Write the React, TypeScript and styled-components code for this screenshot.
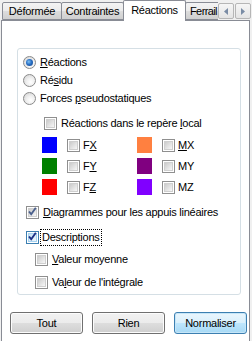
import React from 'react';
import styled, { createGlobalStyle } from 'styled-components';

const GlobalStyle = createGlobalStyle`
  html, body {
    margin: 0;
    padding: 0;
    background: #f0f0f0;
    overflow: hidden;
  }
  body {
    font-family: "Liberation Sans", Arial, sans-serif;
    font-size: 11px;
    letter-spacing: -0.25px;
    color: #000;
  }
`;

const Window = styled.div`
  width: 252px;
  height: 341px;
  background: #f0f0f0;
  overflow: hidden;
`;

const TabStrip = styled.div`
  display: flex;
  height: 20px;
  align-items: flex-start;
`;

const TabList = styled.div`
  display: flex;
  align-items: flex-start;
  width: 218px;
  height: 21px;
  overflow: hidden;
  position: relative;
  z-index: 1;
  padding-left: 2px;
  box-sizing: border-box;
`;

const Tab = styled.div<{ $selected?: boolean; $w: number }>`
  flex: 0 0 auto;
  box-sizing: border-box;
  width: ${(p) => p.$w}px;
  height: ${(p) => (p.$selected ? 21 : 18)}px;
  margin-top: ${(p) => (p.$selected ? 0 : 2)}px;
  margin-left: -1px;
  border: 1px solid #898c95;
  border-bottom: ${(p) => (p.$selected ? 'none' : '1px solid #898c95')};
  border-radius: 2px 2px 0 0;
  background: ${(p) =>
    p.$selected ? '#ffffff' : 'linear-gradient(#f3f3f3, #ebebeb 50%, #dddddd 51%, #cfcfcf)'};
  display: flex;
  justify-content: center;
  padding-top: ${(p) => (p.$selected ? 3 : 2)}px;
  white-space: nowrap;
  position: relative;
  z-index: ${(p) => (p.$selected ? 2 : 1)};
  &:first-child {
    margin-left: 0;
  }
`;

const TabLabelLeft = styled.span`
  padding-left: 4px;
  align-self: flex-start;
  width: 100%;
  letter-spacing: -0.6px;
`;

const Arrows = styled.div`
  display: flex;
  margin-top: 3px;
  gap: 1px;
`;

const ArrowButton = styled.div`
  width: 16px;
  height: 16px;
  box-sizing: border-box;
  border: 1px solid #b6b6b6;
  border-radius: 2px;
  background: linear-gradient(#f6f6f6, #e4e4e4);
  display: flex;
  align-items: center;
  justify-content: center;
`;

const Panel = styled.div`
  margin-left: 1px;
  width: 249px;
  height: 340px;
  box-sizing: border-box;
  border: 1px solid #898c95;
  background: #ffffff;
  padding: 27px 8px 0 15px;
`;

const Group = styled.div`
  border: 1px solid #d5dfe5;
  border-radius: 3px;
  padding: 4px 0 3px 0;
  display: flex;
  flex-direction: column;
`;

const Row = styled.div<{ $indent: number; $top?: number }>`
  display: flex;
  align-items: center;
  height: 18px;
  padding-left: ${(p) => p.$indent}px;
  margin-top: ${(p) => p.$top ?? 0}px;
  white-space: nowrap;
`;

const Label = styled.span<{ $gap?: number; $focus?: boolean }>`
  margin-left: ${(p) => p.$gap ?? 4}px;
  ${(p) =>
    p.$focus
      ? `outline: 1px dotted #000; outline-offset: 0; padding: 1px 1px 2px 1px; margin-left: 2px;`
      : ''}
`;

const RadioCircle = styled.span<{ $checked?: boolean }>`
  width: 13px;
  height: 13px;
  box-sizing: border-box;
  border-radius: 50%;
  border: 1px solid #8a8a8a;
  background: radial-gradient(circle at 60% 65%, #ffffff 0%, #f0f0f0 40%, #cfcfcf 100%);
  display: flex;
  align-items: center;
  justify-content: center;
  &::after {
    content: '';
    display: ${(p) => (p.$checked ? 'block' : 'none')};
    width: 7px;
    height: 7px;
    border-radius: 50%;
    background: radial-gradient(circle at 40% 40%, #7fc3f5 0%, #2a6fc4 45%, #0e3f86 100%);
  }
`;

const CheckBox = styled.span<{ $hot?: boolean }>`
  flex: 0 0 auto;
  width: 13px;
  height: 13px;
  box-sizing: border-box;
  border: 1px solid ${(p) => (p.$hot ? '#3c7fb1' : '#8f8f8f')};
  background: #ffffff;
  padding: 1px;
  display: flex;
`;

const CheckInner = styled.span<{ $hot?: boolean }>`
  flex: 1;
  border: 1px solid ${(p) => (p.$hot ? '#a6d2f0' : '#cfcfcf')};
  background: ${(p) =>
    p.$hot ? 'linear-gradient(135deg, #c4e0f4, #eef7fd)' : 'linear-gradient(135deg, #cbcbcb, #f7f7f7)'};
  position: relative;
`;

const Mark = styled.svg`
  position: absolute;
  left: -2px;
  top: -3px;
`;

const ColorGrid = styled.div`
  display: grid;
  grid-template-columns: 95px 80px;
  row-gap: 5px;
  padding-left: 24px;
  margin-top: 5px;
`;

const ColorCell = styled.div`
  display: flex;
  align-items: center;
  height: 16px;
`;

const Swatch = styled.span<{ $color: string }>`
  width: 15px;
  height: 16px;
  background: ${(p) => p.$color};
  margin-right: 10px;
`;

const ButtonRow = styled.div`
  display: flex;
  justify-content: space-between;
  margin-top: 17px;
  padding: 0 2px 0 8px;
  margin-left: -15px;
  margin-right: -8px;
`;

const Button = styled.div<{ $default?: boolean }>`
  width: 73px;
  height: 22px;
  box-sizing: border-box;
  border: 1px solid ${(p) => (p.$default ? '#3c7fb1' : '#707070')};
  border-radius: 3px;
  background: ${(p) =>
    p.$default
      ? 'linear-gradient(#eaf6fd, #d9f0fc 50%, #bee6fd 51%, #a7d9f5)'
      : 'linear-gradient(#f2f2f2, #ebebeb 50%, #dddddd 51%, #cfcfcf)'};
  box-shadow: inset 0 0 0 1px ${(p) => (p.$default ? '#c6e6f8' : '#fcfcfc')};
  display: flex;
  align-items: center;
  justify-content: center;
`;

type CheckProps = { checked?: boolean; hot?: boolean; dim?: boolean };

const Check: React.FC<CheckProps> = ({ checked, hot, dim }) => (
  <CheckBox $hot={hot}>
    <CheckInner $hot={hot}>
      {checked && (
        <Mark width="11" height="11" viewBox="0 0 11 11">
          <path
            d="M2 5.5 L4.2 8.2 L8.8 1.8"
            fill="none"
            stroke={dim ? '#4a5f8c' : '#1c2f85'}
            strokeWidth="1.9"
          />
        </Mark>
      )}
    </CheckInner>
  </CheckBox>
);

const Arrow: React.FC<{ dir: 'left' | 'right' }> = ({ dir }) => (
  <svg width="4" height="7" viewBox="0 0 4 7">
    <path d={dir === 'left' ? 'M4 0 L0 3.5 L4 7 Z' : 'M0 0 L4 3.5 L0 7 Z'} fill="#7a8ca5" />
  </svg>
);

const forces = [
  { color: '#0000ff', pre: 'F', key: 'X', color2: '#ff8040', m: ['', 'M', 'X'] },
  { color: '#008000', pre: 'F', key: 'Y', color2: '#800080', m: ['MY', '', ''] },
  { color: '#ff0000', pre: 'F', key: 'Z', color2: '#8000ff', m: ['MZ', '', ''] },
];

const App: React.FC = () => {
  return (
    <Window>
      <GlobalStyle />
      <TabStrip>
        <TabList>
          <Tab $w={60}>Déformée</Tab>
          <Tab $w={63}>Contraintes</Tab>
          <Tab $w={63} $selected>
            Réactions
          </Tab>
          <Tab $w={50}>
            <TabLabelLeft>Ferrail</TabLabelLeft>
          </Tab>
        </TabList>
        <Arrows>
          <ArrowButton>
            <Arrow dir="left" />
          </ArrowButton>
          <ArrowButton>
            <Arrow dir="right" />
          </ArrowButton>
        </Arrows>
      </TabStrip>

      <Panel>
        <Group>
          <Row $indent={5}>
            <RadioCircle $checked />
            <Label>
              <u>R</u>éactions
            </Label>
          </Row>
          <Row $indent={5}>
            <RadioCircle />
            <Label>
              Ré<u>s</u>idu
            </Label>
          </Row>
          <Row $indent={5}>
            <RadioCircle />
            <Label>
              Forces <u>p</u>seudostatiques
            </Label>
          </Row>
          <Row $indent={26} $top={7}>
            <Check />
            <Label>
              Réactions dans le repère <u>l</u>ocal
            </Label>
          </Row>

          <ColorGrid>
            {forces.map((f) => (
              <React.Fragment key={f.key}>
                <ColorCell>
                  <Swatch $color={f.color} />
                  <Check />
                  <Label $gap={3}>
                    {f.pre}
                    <u>{f.key}</u>
                  </Label>
                </ColorCell>
                <ColorCell>
                  <Swatch $color={f.color2} />
                  <Check />
                  <Label $gap={3}>
                    {f.m[0]}
                    {f.m[1] && <u>{f.m[1]}</u>}
                    {f.m[2]}
                  </Label>
                </ColorCell>
              </React.Fragment>
            ))}
          </ColorGrid>

          <Row $indent={8} $top={8}>
            <Check checked dim />
            <Label>
              <u>D</u>iagrammes pour les appuis linéaires
            </Label>
          </Row>
          <Row $indent={8} $top={7}>
            <Check checked hot />
            <Label $focus>Descriptions</Label>
          </Row>
          <Row $indent={17} $top={4}>
            <Check />
            <Label>
              <u>V</u>aleur moyenne
            </Label>
          </Row>
          <Row $indent={17} $top={5}>
            <Check />
            <Label>
              Va<u>l</u>eur de l'intégrale
            </Label>
          </Row>
        </Group>

        <ButtonRow>
          <Button>Tout</Button>
          <Button>Rien</Button>
          <Button $default>Normaliser</Button>
        </ButtonRow>
      </Panel>
    </Window>
  );
};

export default App;
